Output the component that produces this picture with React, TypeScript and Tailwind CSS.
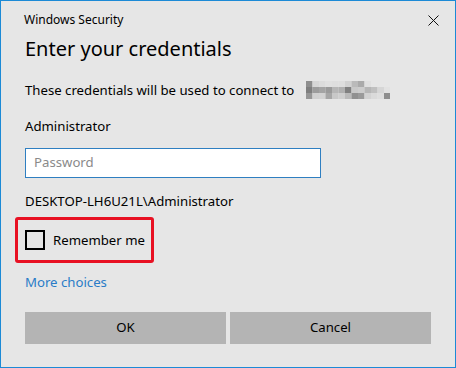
import React from 'react'

const blocks: [number, number, string][] = [
  [0, 0, '#8e8e8e'], [0, 1, '#7e7e7e'], [0, 2, '#969696'],
  [1, 0, '#d6d6d6'], [1, 1, '#9c9c9c'], [1, 2, '#d0d0d0'],
  [2, 0, '#dcdcdc'], [2, 1, '#a4a4a4'], [2, 2, '#d2d2d2'],
  [3, 0, '#e0e0e0'], [3, 1, '#9a9a9a'], [3, 2, '#a6a6a6'],
  [4, 0, '#dedede'], [4, 1, '#b6b6b6'], [4, 2, '#c8c8c8'],
  [5, 0, '#dedede'], [5, 1, '#b0b0b0'], [5, 2, '#cecece'],
  [6, 0, '#d2d2d2'], [6, 1, '#808080'], [6, 2, '#bababa'],
  [7, 0, '#bababa'], [7, 1, '#c8c8c8'], [7, 2, '#909090'],
  [8, 0, '#aaaaaa'], [8, 1, '#cccccc'], [8, 2, '#9a9a9a'],
  [9, 0, '#e0e0e0'], [9, 1, '#b6b6b6'], [9, 2, '#d2d2d2'],
  [10, 0, '#e6e6e6'], [10, 1, '#c0c0c0'], [10, 2, '#dadada'],
  [11, 0, '#e6e6e6'], [11, 1, '#d6d6d6'], [11, 2, '#dedede'],
  [12, 0, '#e6e6e6'], [12, 1, '#e2e2e2'], [12, 2, '#8e8e8e'],
]

function Pixelated() {
  return (
    <svg width="84" height="18" viewBox="0 0 84 18" className="block">
      {blocks.map(([c, r, fill]) => (
        <rect key={`${c}-${r}`} x={c * 6.5} y={r * 6} width="6.5" height="6" fill={fill} />
      ))}
    </svg>
  )
}

export default function App() {
  return (
    <div
      className="w-[456px] h-[368px] bg-[#e6e6e6] border border-[#1c8ad6] text-black overflow-hidden"
      style={{ fontFamily: '"Segoe UI", "Noto Sans", "Open Sans", sans-serif' }}
    >
      <div className="flex items-center justify-between pl-[23px] pr-[16px] pt-[7px] h-[30px]">
        <span className="text-[12px] leading-[16px]">Windows Security</span>
        <svg width="11" height="11" viewBox="0 0 11 11" className="mt-[2px]">
          <path d="M0.5 0.5 L10.5 10.5 M10.5 0.5 L0.5 10.5" stroke="#111" strokeWidth="1" />
        </svg>
      </div>

      <div className="pl-[24px] pr-[24px]">
        <h1 className="text-[20px] leading-[26px] mt-[5px]">Enter your credentials</h1>

        <div className="flex items-center mt-[18px] h-[20px]">
          <span className="text-[13.2px] leading-[20px]">These credentials will be used to connect to</span>
          <span className="ml-[12px]">
            <Pixelated />
          </span>
        </div>

        <div className="text-[13.2px] leading-[20px] mt-[16px]">Administrator</div>

        <div className="mt-[12px] w-[296px] h-[30px] bg-white border border-[#2f7fc1] flex items-center px-[8px]">
          <span className="text-[13.2px] text-[#8a8a8a]">Password</span>
        </div>

        <div className="text-[13.2px] leading-[20px] mt-[13px]">DESKTOP-LH6U21L\Administrator</div>

        <div className="-ml-[10px] mt-[6px] w-[139px] h-[46px] border-[3px] border-[#e81123] rounded-[3px] flex items-center pl-[7px]">
          <div className="w-[20px] h-[20px] border-2 border-black" />
          <span className="ml-[8px] text-[13.2px] leading-[20px]">Remember me</span>
        </div>

        <div className="text-[13.2px] leading-[20px] mt-[9px] text-[#2a7cc7]">More choices</div>

        <div className="flex gap-[4px] mt-[20px]">
          <button className="w-[201px] h-[32px] bg-[#b4b4b4] text-[13.2px]">OK</button>
          <button className="w-[201px] h-[32px] bg-[#b4b4b4] text-[13.2px]">Cancel</button>
        </div>
      </div>
    </div>
  )
}
